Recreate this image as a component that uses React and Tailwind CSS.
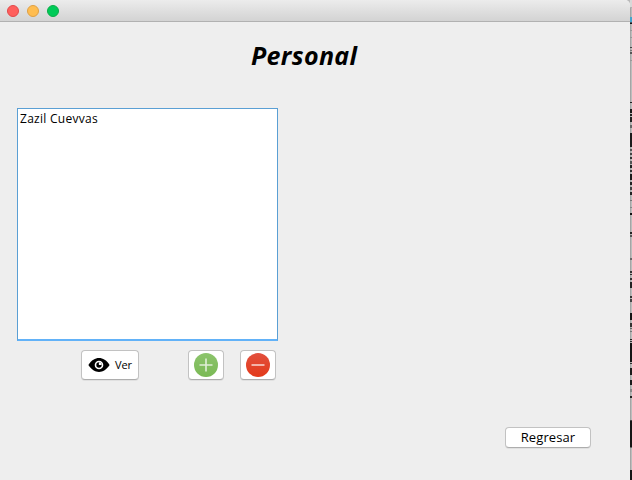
const edgeMarks = [
  [0, 7, "#d8d8d8"], [7, 1, "#b0b0b0"], [17, 5, "#45a5cc"], [22, 1, "#46565e"], [23, 1, "#111111"],
  [30, 1, "#999999"], [37, 1, "#999999"], [47, 1, "#444444"], [50, 1, "#777777"], [52, 2, "#555555"], [60, 1, "#999999"],
  [102, 1, "#222222"], [109, 4, "#1a1a1a"], [114, 2, "#222222"], [117, 5, "#222222"], [125, 3, "#666666"],
  [133, 14, "#1c1c1c"], [149, 2, "#555555"], [153, 2, "#444444"], [157, 2, "#333333"], [161, 3, "#555555"],
  [165, 3, "#222222"], [170, 2, "#333333"], [174, 6, "#1c1c1c"], [182, 3, "#222222"], [187, 3, "#444444"], [192, 3, "#222222"],
  [200, 1, "#777777"], [207, 1, "#888888"], [213, 2, "#111111"], [232, 2, "#222222"], [235, 2, "#555555"],
  [258, 2, "#666666"], [271, 2, "#333333"], [274, 1, "#333333"], [278, 2, "#333333"], [282, 6, "#222222"],
  [296, 2, "#333333"], [299, 3, "#444444"], [313, 7, "#151515"], [323, 4, "#333333"], [328, 1, "#666666"],
  [331, 1, "#777777"], [339, 1, "#222222"], [341, 1, "#333333"], [343, 19, "#151515"], [363, 1, "#333333"],
  [368, 7, "#1c1c1c"], [380, 5, "#1c1c1c"], [389, 3, "#888888"], [396, 2, "#222222"],
  [420, 1, "#444444"], [421, 26, "#151515"], [447, 1, "#666666"], [470, 10, "#151515"],
];

function TrafficLight({ className }) {
  return <span className={`size-3 rounded-full border ${className}`} />;
}

function Button({ className, children, ...rest }) {
  return (
    <button
      className={`flex items-center justify-center rounded-[4px] border border-[#c2c2c2] border-b-[#adadad] bg-white shadow-[0_1px_0_rgba(0,0,0,0.06)] ${className}`}
      {...rest}
    >
      {children}
    </button>
  );
}

function EyeIcon() {
  return (
    <svg width="22" height="14" viewBox="0 0 22 14" className="shrink-0">
      <path d="M0.4 7C3.6 2.2 7 0.1 11 0.1S18.4 2.2 21.6 7C18.4 11.8 15 13.9 11 13.9S3.6 11.8 0.4 7Z" fill="#000" />
      <circle cx="11" cy="7" r="4.3" fill="#fff" />
      <circle cx="11" cy="7" r="2.7" fill="#000" />
      <path d="M10.9 6.9V4.2A2.7 2.7 0 0 1 13.6 6.9Z" fill="#fff" />
    </svg>
  );
}

function RoundIcon({ id, top, bottom, plus }) {
  return (
    <svg width="24" height="24" viewBox="0 0 24 24" className="shrink-0">
      <defs>
        <linearGradient id={id} x1="0" y1="0" x2="0" y2="1">
          <stop offset="0" stopColor={top} />
          <stop offset="1" stopColor={bottom} />
        </linearGradient>
      </defs>
      <circle cx="12" cy="12" r="12" fill={`url(#${id})`} />
      <path d={plus ? "M5.5 12h13M12 5.5v13" : "M5.5 12h13"} stroke="#fff" strokeOpacity="0.75" strokeWidth="1.6" />
    </svg>
  );
}

export default function App() {
  return (
    <div className="flex h-[480px] w-[632px] overflow-hidden bg-[#b9b9b9] font-['Open_Sans','Noto_Sans',sans-serif] text-black">
      <main className="flex w-[630px] shrink-0 flex-col rounded-tr-[5px] bg-[#eeeeee]">
        <header className="flex h-[22px] shrink-0 items-center gap-2 rounded-tr-[5px] border-b border-[#b1b1b1] bg-linear-to-b from-[#ececec] to-[#d3d3d3] pl-[7px]">
          <TrafficLight className="border-[#e2494a] bg-[#ff5f5c]" />
          <TrafficLight className="border-[#dfa044] bg-[#ffbd50]" />
          <TrafficLight className="border-[#0cac48] bg-[#00cb58]" />
        </header>
        <h1 className="mt-[16px] h-[34px] pl-[251px] text-[25px] leading-[34px] font-bold tracking-[0.35px] italic whitespace-nowrap">
          Personal
        </h1>
        <div className="mt-[36px] ml-[17px] h-[233px] w-[261px] shrink-0 border border-b-2 border-[#5a9fd4] border-b-[#62b2f8] bg-white pt-[2px] pl-[2px] text-[12px] leading-4 tracking-[0.28px]">
          Zazil Cuevvas
        </div>
        <div className="mt-[9px] flex h-[30px] shrink-0 pl-[81px]">
          <Button className="w-[58px] gap-[5px] text-[11px]">
            <EyeIcon />
            <span>Ver</span>
          </Button>
          <Button className="ml-[49px] w-9" aria-label="Agregar">
            <RoundIcon id="add" top="#8cc46c" bottom="#7ab955" plus />
          </Button>
          <Button className="ml-4 w-9" aria-label="Eliminar">
            <RoundIcon id="remove" top="#e2503e" bottom="#e33a1a" />
          </Button>
        </div>
        <Button className="mt-[47px] ml-[505px] h-[21px] w-[86px] shrink-0 text-[13px] tracking-[0.1px]">Regresar</Button>
      </main>
      <svg width="2" height="480" viewBox="0 0 2 480" className="shrink-0" shapeRendering="crispEdges">
        <rect width="2" height="480" fill="#bdbdbd" />
        <rect width="1" height="480" fill="#a5a5a5" />
        {edgeMarks.map(([y, h, fill]) => (
          <rect key={y} y={y} width="2" height={h} fill={fill} />
        ))}
      </svg>
    </div>
  );
}
